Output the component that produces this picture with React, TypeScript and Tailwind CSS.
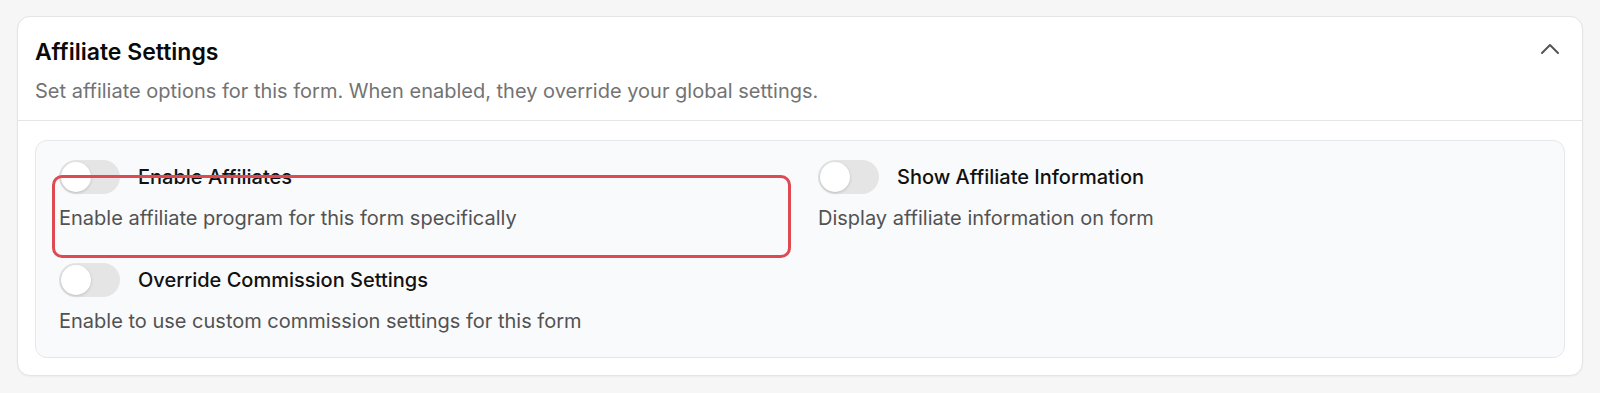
import React from 'react';

type Option = {
  id: string;
  label: string;
  description: string;
};

const options: Option[] = [
  { id: 'enable', label: 'Enable Affiliates', description: 'Enable affiliate program for this form specifically' },
  { id: 'show', label: 'Show Affiliate Information', description: 'Display affiliate information on form' },
  { id: 'override', label: 'Override Commission Settings', description: 'Enable to use custom commission settings for this form' },
];

const Toggle: React.FC<{ on?: boolean }> = ({ on = false }) => (
  <button
    type="button"
    role="switch"
    aria-checked={on}
    className="relative flex h-[34px] w-[61px] shrink-0 items-center rounded-full bg-[#e5e5e5] px-[2px]"
  >
    <span className="block h-[30px] w-[30px] rounded-full bg-white shadow-[0_1px_3px_rgba(0,0,0,0.18)]" />
  </button>
);

const App: React.FC = () => {
  return (
    <div className="min-h-[393px] bg-[#f6f6f6] px-[17px] pt-[16px] pb-[17px] font-['Inter',sans-serif]">
      <div className="rounded-[13px] border border-[#e4e4e4] bg-white shadow-[0_1px_2px_rgba(0,0,0,0.04)]">
        <div className="border-b border-[#e6e6e6] px-[17px] pt-[21px] pb-[15px]">
          <div className="flex items-center justify-between">
            <h2 className="text-[23px] leading-[28px] font-semibold text-[#0a0a0a]">Affiliate Settings</h2>
            <svg width="20" height="12" viewBox="0 0 20 12" className="mr-[5px] mb-[6px] text-[#555]" fill="none" stroke="currentColor" strokeWidth="2" strokeLinecap="round" strokeLinejoin="round">
              <polyline points="2,10 10,2 18,10" />
            </svg>
          </div>
          <p className="mt-[11px] text-[20px] leading-[28px] text-[#737373]">
            Set affiliate options for this form. When enabled, they override your global settings.
          </p>
        </div>

        <div className="px-[17px] pt-[19px] pb-[17px]">
          <div className="relative rounded-[12px] border border-[#e5e7eb] bg-[#f9fafb] px-[23px] pt-[19px] pb-[22px]">
            <div className="grid grid-cols-2 gap-x-[36px] gap-y-[31px]">
              {options.map((opt) => (
                <div key={opt.id} className="flex flex-col">
                  <div className="flex h-[34px] items-center gap-[18px]">
                    <Toggle />
                    <span className="text-[20px] leading-[28px] font-medium text-[#111]">{opt.label}</span>
                  </div>
                  <p className="mt-[10px] text-[20px] leading-[28px] text-[#525252]">{opt.description}</p>
                </div>
              ))}
            </div>

            {/* highlight annotation */}
            <div className="pointer-events-none absolute left-[16px] top-[34px] h-[83px] w-[739px] rounded-[10px] border-[3px] border-[#df4a52]" />
          </div>
        </div>
      </div>
    </div>
  );
};

export default App;
